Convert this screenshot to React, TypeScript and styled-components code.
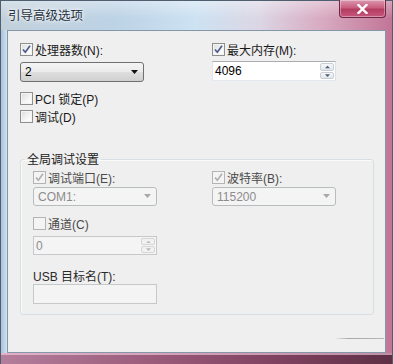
import React from "react";
import styled, { createGlobalStyle } from "styled-components";

const GlobalStyle = createGlobalStyle`
  html, body {
    margin: 0;
    width: 393px;
    height: 364px;
    overflow: hidden;
    background: #b9cfe2;
  }
  body {
    font-family: "Liberation Sans", "Noto Sans CJK SC", sans-serif;
    font-size: 12px;
  }
`;

const Window = styled.div`
  position: relative;
  width: 393px;
  height: 364px;
  display: flex;
  flex-direction: column;
  box-sizing: border-box;
  border: 1px solid #4f5f70;
  border-bottom: none;
  background: linear-gradient(
    90deg,
    #c2d0db 0%,
    #bdd3e6 30%,
    #cde2f2 50%,
    #dcd6e4 66%,
    #d8abc2 82%,
    #c27596 100%
  );
`;

const TitleBar = styled.div`
  height: 29px;
  display: flex;
  align-items: flex-start;
  justify-content: space-between;
  background: linear-gradient(180deg, rgba(255, 255, 255, 0.35), rgba(255, 255, 255, 0) 60%);
`;

const Title = styled.div`
  margin: 7px 0 0 7px;
  font-family: "Noto Sans CJK SC", sans-serif;
  font-size: 12.5px;
  line-height: 14px;
  color: #27323e;
  text-shadow: 0 0 6px #fff, 0 0 3px #fff;
`;

const CloseButton = styled.div`
  width: 47px;
  height: 18px;
  margin: -1px 6px 0 0;
  box-sizing: border-box;
  border: 1px solid #6e2740;
  border-top: none;
  border-radius: 0 0 4px 4px;
  background: linear-gradient(180deg, #dc98b0 0%, #c95e80 45%, #b43d62 55%, #c6567d 100%);
  box-shadow: inset 0 0 0 1px rgba(255, 255, 255, 0.35);
  display: flex;
  align-items: center;
  justify-content: center;
`;

const Middle = styled.div`
  flex: 1;
  display: flex;
  padding: 0 6px;
  background: linear-gradient(90deg, #a7c3dc 0px, #d2e2ef 6px, transparent 7px);
`;

const Client = styled.div`
  flex: 1;
  box-sizing: border-box;
  border: 1px solid #8497a9;
  background: #efefef;
  padding: 10px 11px 0 12px;
`;

const BottomFrame = styled.div`
  height: 11px;
  background: linear-gradient(90deg, #b47f9c 0%, #9a5a7a 40%, #7a3f5c 75%, #5e3045 100%);
  box-shadow: inset 0 2px 0 rgba(255, 210, 230, 0.6);
`;

const TopGrid = styled.div`
  display: grid;
  grid-template-columns: 192px 1fr;
`;

const Column = styled.div`
  display: flex;
  flex-direction: column;
  align-items: flex-start;
`;

const Row = styled.label<{ $mt?: number; $disabled?: boolean }>`
  display: flex;
  align-items: center;
  gap: 2px;
  height: 16px;
  margin-top: ${({ $mt }) => $mt ?? 0}px;
  color: ${({ $disabled }) => ($disabled ? "#4a4a4a" : "#1a1a1a")};
  white-space: nowrap;
`;

const Box = styled.span<{ $disabled?: boolean }>`
  width: 13px;
  height: 13px;
  box-sizing: border-box;
  border: 1px solid ${({ $disabled }) => ($disabled ? "#b4b4b4" : "#8e8f8f")};
  background: ${({ $disabled }) =>
    $disabled ? "#f4f4f4" : "linear-gradient(135deg, #dcdcdc 0%, #f6f6f6 60%, #ffffff 100%)"};
  box-shadow: inset 0 0 0 1px #f4f4f4;
  display: flex;
  align-items: center;
  justify-content: center;
`;

const Combo = styled.div<{ $mt?: number; $h?: number; $disabled?: boolean }>`
  width: 124px;
  height: ${({ $h }) => $h ?? 20}px;
  margin-top: ${({ $mt }) => $mt ?? 0}px;
  box-sizing: border-box;
  border: 1px solid ${({ $disabled }) => ($disabled ? "#b7bcbf" : "#707070")};
  border-radius: 3px;
  background: ${({ $disabled }) =>
    $disabled
      ? "#f4f4f4"
      : "linear-gradient(180deg, #f4f4f4 0%, #ebebeb 50%, #dedede 51%, #d0d0d0 100%)"};
  display: flex;
  align-items: center;
  justify-content: space-between;
  padding: 0 5px 0 4px;
  color: ${({ $disabled }) => ($disabled ? "#8c8c8c" : "#000")};
`;

const Spin = styled.div<{ $mt?: number; $h?: number; $disabled?: boolean }>`
  width: 124px;
  height: ${({ $h }) => $h ?? 20}px;
  margin-top: ${({ $mt }) => $mt ?? 0}px;
  box-sizing: border-box;
  border: 1px solid;
  border-color: ${({ $disabled }) =>
    $disabled ? "#c6c9cc" : "#abadb3 #dbdfe6 #e3e9ef #e2e3ea"};
  background: ${({ $disabled }) => ($disabled ? "#f4f4f4" : "#fff")};
  display: flex;
  color: ${({ $disabled }) => ($disabled ? "#8c8c8c" : "#000")};
`;

const SpinValue = styled.div`
  flex: 1;
  display: flex;
  align-items: center;
  padding-left: 2px;
`;

const SpinButtons = styled.div`
  width: 16px;
  display: flex;
  flex-direction: column;
  gap: 1px;
  padding: 1px;
  box-sizing: border-box;
`;

const SpinButton = styled.div<{ $disabled?: boolean }>`
  flex: 1;
  border: 1px solid ${({ $disabled }) => ($disabled ? "#d6d6d6" : "#c9ced6")};
  border-radius: 2px;
  background: ${({ $disabled }) =>
    $disabled ? "#f1f1f1" : "linear-gradient(180deg, #f6f7f9, #e2e6ec)"};
  display: flex;
  align-items: center;
  justify-content: center;
`;

const TextBox = styled.div<{ $mt?: number }>`
  width: 124px;
  height: 20px;
  margin-top: ${({ $mt }) => $mt ?? 0}px;
  box-sizing: border-box;
  border: 1px solid #c6c9cc;
  background: #f4f4f4;
`;

const Group = styled.fieldset`
  margin: 27px 0 0;
  min-width: 0;
  padding: 2px 12px 10px 12px;
  border: 1px solid #d5dfe5;
  border-radius: 3px;
  box-shadow: inset 1px 1px 0 #fafafa;
`;

const Legend = styled.legend`
  margin-left: -8px;
  padding: 0 2px;
  font-family: "Noto Sans CJK SC", sans-serif;
  font-size: 12px;
  line-height: 16px;
  color: #222;
`;

const GroupGrid = styled.div`
  display: grid;
  grid-template-columns: 179px 1fr;
`;

const FieldLabel = styled.div<{ $mt?: number }>`
  height: 16px;
  margin-top: ${({ $mt }) => $mt ?? 0}px;
  display: flex;
  align-items: center;
  color: #2a2a2a;
`;

const Watermark = styled.div`
  position: absolute;
  right: 8px;
  bottom: 25px;
  width: 50px;
  height: 1px;
  background: linear-gradient(90deg, transparent, #a8a8a8 30%, #b8b8b8);
`;

const Check = ({ color }: { color: string }) => (
  <svg width="11" height="11" viewBox="0 0 11 11">
    <path d="M2 5.5 L4.3 8.3 L9 1.8" fill="none" stroke={color} strokeWidth="1.7" strokeLinejoin="round" />
  </svg>
);

const Arrow = ({ color, up, size = 7 }: { color: string; up?: boolean; size?: number }) => (
  <svg width={size} height={size / 2 + 1} viewBox="0 0 8 5">
    <path d={up ? "M0 5 L4 1 L8 5 Z" : "M0 0 L8 0 L4 4.5 Z"} fill={color} />
  </svg>
);

type CheckProps = { label: string; checked?: boolean; disabled?: boolean; mt?: number };

const CheckRow = ({ label, checked, disabled, mt }: CheckProps) => (
  <Row $mt={mt} $disabled={disabled}>
    <Box $disabled={disabled}>{checked && <Check color={disabled ? "#b0b0b0" : "#4b5f8f"} />}</Box>
    {label}
  </Row>
);

const ComboBox = ({ value, disabled, mt, h }: { value: string; disabled?: boolean; mt?: number; h?: number }) => (
  <Combo $mt={mt} $h={h} $disabled={disabled}>
    <span>{value}</span>
    <Arrow color={disabled ? "#a8a8a8" : "#111"} />
  </Combo>
);

const SpinBox = ({ value, disabled, mt, h }: { value: string; disabled?: boolean; mt?: number; h?: number }) => (
  <Spin $mt={mt} $h={h} $disabled={disabled}>
    <SpinValue>{value}</SpinValue>
    <SpinButtons>
      <SpinButton $disabled={disabled}>
        <Arrow up size={5} color={disabled ? "#b8b8b8" : "#4d5c72"} />
      </SpinButton>
      <SpinButton $disabled={disabled}>
        <Arrow size={5} color={disabled ? "#b8b8b8" : "#4d5c72"} />
      </SpinButton>
    </SpinButtons>
  </Spin>
);

export default function App() {
  return (
    <>
      <GlobalStyle />
      <Window>
        <TitleBar>
          <Title>引导高级选项</Title>
          <CloseButton>
            <svg width="11" height="10" viewBox="0 0 11 10">
              <path d="M1.5 1 L9.5 9 M9.5 1 L1.5 9" stroke="#fff" strokeWidth="2.4" strokeLinecap="square" />
            </svg>
          </CloseButton>
        </TitleBar>
        <Middle>
          <Client>
            <TopGrid>
              <Column>
                <CheckRow label="处理器数(N):" checked />
                <ComboBox value="2" mt={5} />
                <CheckRow label="PCI 锁定(P)" mt={8} />
                <CheckRow label="调试(D)" mt={2} />
              </Column>
              <Column>
                <CheckRow label="最大内存(M):" checked />
                <SpinBox value="4096" mt={4} />
              </Column>
            </TopGrid>
            <Group>
              <Legend>全局调试设置</Legend>
              <GroupGrid>
                <Column>
                  <CheckRow label="调试端口(E):" checked disabled />
                  <ComboBox value="COM1:" disabled mt={2} h={19} />
                  <CheckRow label="通道(C)" disabled mt={9} />
                  <SpinBox value="0" disabled mt={5} h={19} />
                  <FieldLabel $mt={12}>USB 目标名(T):</FieldLabel>
                  <TextBox $mt={1} />
                </Column>
                <Column>
                  <CheckRow label="波特率(B):" checked disabled />
                  <ComboBox value="115200" disabled mt={2} h={19} />
                </Column>
              </GroupGrid>
            </Group>
          </Client>
        </Middle>
        <BottomFrame />
        <Watermark />
      </Window>
    </>
  );
}
